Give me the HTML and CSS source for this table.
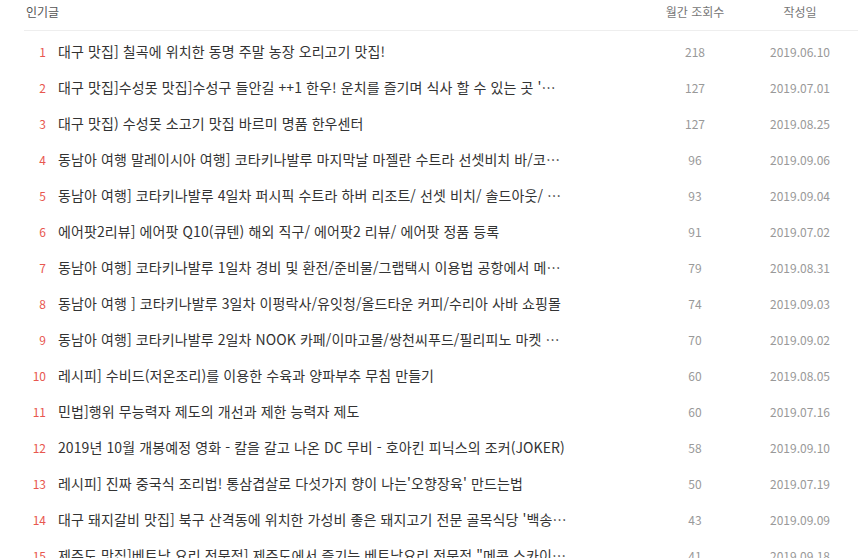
FILE: index.html
```html
<!DOCTYPE html>
<html lang="ko">
<head>
  <meta charset="UTF-8">
  <title>인기글</title>
  <link rel="stylesheet" href="styles.css">
</head>
<body>
  <div class="popular">
    <div class="popular-head">
      <span class="head-title">인기글</span>
      <span class="head-views">월간 조회수</span>
      <span class="head-date">작성일</span>
    </div>

    <ul class="post-list">
      <li class="post"><span class="rank">1</span><span class="title">대구 맛집] 칠곡에 위치한 동명 주말 농장 오리고기 맛집!</span><span class="views">218</span><span class="date">2019.06.10</span></li>
      <li class="post"><span class="rank">2</span><span class="title">대구 맛집]수성못 맛집]수성구 들안길 ++1 한우! 운치를 즐기며 식사 할 수 있는 곳 '바르미 명품 한우센터'</span><span class="views">127</span><span class="date">2019.07.01</span></li>
      <li class="post"><span class="rank">3</span><span class="title">대구 맛집) 수성못 소고기 맛집 바르미 명품 한우센터</span><span class="views">127</span><span class="date">2019.08.25</span></li>
      <li class="post"><span class="rank">4</span><span class="title">동남아 여행 말레이시아 여행] 코타키나발루 마지막날 마젤란 수트라 선셋비치 바/코타키나발루 공항</span><span class="views">96</span><span class="date">2019.09.06</span></li>
      <li class="post"><span class="rank">5</span><span class="title">동남아 여행] 코타키나발루 4일차 퍼시픽 수트라 하버 리조트/ 선셋 비치/ 솔드아웃/ 호캉스</span><span class="views">93</span><span class="date">2019.09.04</span></li>
      <li class="post"><span class="rank">6</span><span class="title">에어팟2리뷰] 에어팟 Q10(큐텐) 해외 직구/ 에어팟2 리뷰/ 에어팟 정품 등록</span><span class="views">91</span><span class="date">2019.07.02</span></li>
      <li class="post"><span class="rank">7</span><span class="title">동남아 여행] 코타키나발루 1일차 경비 및 환전/준비물/그랩택시 이용법 공항에서 메리어트 호텔까지</span><span class="views">79</span><span class="date">2019.08.31</span></li>
      <li class="post"><span class="rank">8</span><span class="title">동남아 여행 ] 코타키나발루 3일차 이펑락사/유잇청/올드타운 커피/수리아 사바 쇼핑몰</span><span class="views">74</span><span class="date">2019.09.03</span></li>
      <li class="post"><span class="rank">9</span><span class="title">동남아 여행] 코타키나발루 2일차 NOOK 카페/이마고몰/쌍천씨푸드/필리피노 마켓 뿌리기</span><span class="views">70</span><span class="date">2019.09.02</span></li>
      <li class="post"><span class="rank">10</span><span class="title">레시피] 수비드(저온조리)를 이용한 수육과 양파부추 무침 만들기</span><span class="views">60</span><span class="date">2019.08.05</span></li>
      <li class="post"><span class="rank">11</span><span class="title">민법]행위 무능력자 제도의 개선과 제한 능력자 제도</span><span class="views">60</span><span class="date">2019.07.16</span></li>
      <li class="post"><span class="rank">12</span><span class="title">2019년 10월 개봉예정 영화 - 칼을 갈고 나온 DC 무비 - 호아킨 피닉스의 조커(JOKER)</span><span class="views">58</span><span class="date">2019.09.10</span></li>
      <li class="post"><span class="rank">13</span><span class="title">레시피] 진짜 중국식 조리법! 통삼겹살로 다섯가지 향이 나는'오향장육' 만드는법</span><span class="views">50</span><span class="date">2019.07.19</span></li>
      <li class="post"><span class="rank">14</span><span class="title">대구 돼지갈비 맛집] 북구 산격동에 위치한 가성비 좋은 돼지고기 전문 골목식당 '백송참숯불갈비'</span><span class="views">43</span><span class="date">2019.09.09</span></li>
      <li class="post"><span class="rank">15</span><span class="title">제주도 맛집]베트남 요리 전문점] 제주도에서 즐기는 베트남요리 전문점 "메콩 스카이(Mekong Sky)"</span><span class="views">41</span><span class="date">2019.09.18</span></li>
    </ul>
  </div>
</body>
</html>
```

FILE: styles.css
```css
body {
  margin: 0;
  font-family: "Noto Sans CJK KR", "Noto Sans", sans-serif;
  color: #333;
  background: #fff;
}

.popular {
  margin-left: 24px;
  width: 834px;
}

/* Header row */
.popular-head {
  display: grid;
  grid-template-columns: minmax(0, 1fr) 100px 110px;
  padding-right: 3px;
  height: 30px;
  align-items: center;
  border-bottom: 1px solid #eee;
  font-size: 12px;
  color: #777;
}

.head-title {
  padding-left: 2px;
  color: #555;
  margin-top: -8px;
}

.head-views, .head-date {
  text-align: center;
  margin-top: -8px;
}

/* Post list */
.post-list {
  list-style: none;
  margin: 2px 0 0;
  padding: 0;
}

.post {
  display: grid;
  grid-template-columns: 22px minmax(0, 1fr) 100px 110px;
  padding-right: 3px;
  height: 36px;
  align-items: center;
  font-size: 14px;
}

.rank {
  text-align: right;
  color: #e8574f;
  font-size: 12px;
}

.title {
  margin-left: 12px;
  max-width: 510px;
  white-space: nowrap;
  overflow: hidden;
  text-overflow: ellipsis;
  letter-spacing: 0.1px;
  color: #333;
}

.views, .date {
  text-align: center;
  color: #999;
  font-size: 12px;
}
```
